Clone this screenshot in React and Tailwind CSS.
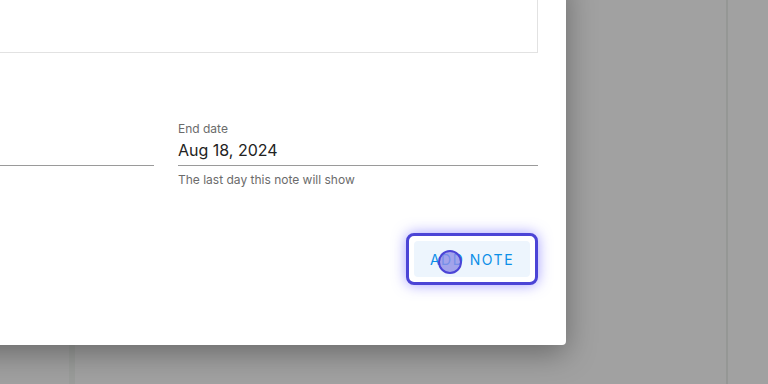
import React from 'react'

function DateField({ label, value, helper }) {
  return (
    <div className="flex w-[360px] flex-col items-start">
      <label className="text-[12px] leading-[18px] text-[#6b6b6b]">{label}</label>
      <div className="w-full border-b border-[#9a9a9a] pb-[3px] text-[16px] leading-[24px] text-[#222]">
        <span>{value}</span>
      </div>
      <p className="mt-[5px] text-[12px] leading-[18px] text-[#6b6b6b]">{helper}</p>
    </div>
  )
}

export default function App() {
  return (
    <div className="relative h-[384px] w-[768px] overflow-hidden bg-[#a1a1a1] font-['Inter','Liberation_Sans',sans-serif]">
      {/* page behind the overlay */}
      <div className="flex h-full">
        <div className="w-[69px] bg-[#a0a0a0]" />
        <div className="w-[6px] bg-[#9a9c9a]" />
        <div className="flex-1" />
        <div className="w-[2px] bg-[#959795]" />
        <div className="w-[40px]" />
      </div>

      {/* dialog, its left part lies outside the view */}
      <div className="absolute left-[-234px] top-[-24px] flex h-[369px] w-[800px] flex-col rounded-[4px] bg-white px-[28px] shadow-[0_8px_30px_rgba(0,0,0,0.35)]">
        <div className="h-[77px] border border-[#e2e2e2]" />

        <div className="mt-[67px] flex gap-[24px]">
          <DateField label={'\u00a0'} value={'\u00a0'} helper={'\u00a0'} />
          <DateField label="End date" value="Aug 18, 2024" helper="The last day this note will show" />
        </div>

        <div className="mt-[44px] flex justify-end">
          <div className="relative rounded-[8px] border-[3px] border-[#4b44d6] bg-white p-[5px] shadow-[0_0_14px_rgba(90,80,255,0.55)]">
            <button className="flex h-[36px] w-[116px] items-center justify-center rounded-[4px] bg-[#edf5fd] text-[14px] font-normal tracking-[1.5px] text-[#0b8fe8]">
              ADD NOTE
            </button>
            <div className="absolute left-[29px] top-[14px] h-[24px] w-[24px] rounded-full border-[2px] border-[#4b44d6] bg-[#8f8fe6]/80" />
          </div>
        </div>
      </div>
    </div>
  )
}
